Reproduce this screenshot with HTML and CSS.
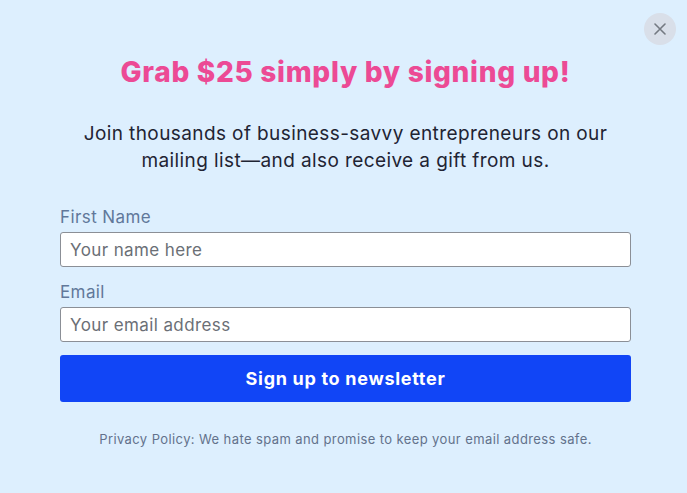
FILE: index.html
```html
<!DOCTYPE html>
<html lang="en">
<head>
    <meta charset="UTF-8">
    <meta name="viewport" content="width=device-width, initial-scale=1.0">
    <title>Newsletter Signup</title>
    <link rel="stylesheet" href="styles.css">
</head>
<body>
    <div class="popup">
        <button class="close-btn" aria-label="Close">
            <svg width="12" height="12" viewBox="0 0 12 12">
                <path d="M1 1 L11 11 M11 1 L1 11" stroke="#747a82" stroke-width="1.6" stroke-linecap="round"/>
            </svg>
        </button>

        <h1>Grab $25 simply by signing up!</h1>
        <p class="intro">Join thousands of business-savvy entrepreneurs on our mailing list—and also receive a gift from us.</p>

        <form class="signup-form">
            <label for="firstName">First Name</label>
            <input type="text" id="firstName" placeholder="Your name here">

            <label for="email">Email</label>
            <input type="email" id="email" placeholder="Your email address">

            <button type="button" class="submit-btn">Sign up to newsletter</button>
        </form>

        <p class="privacy">Privacy Policy: We hate spam and promise to keep your email address safe.</p>
    </div>
</body>
</html>
```

FILE: styles.css
```css
body {
    margin: 0;
    background-color: #ddeffe;
    font-family: 'Inter', 'Roboto', sans-serif;
    letter-spacing: 0.4px;
}

.popup {
    position: relative;
    height: 493px;
    box-sizing: border-box;
    padding: 55px 56px 0 60px;
    text-align: center;
}

.close-btn {
    position: absolute;
    top: 13px;
    right: 11px;
    width: 32px;
    height: 32px;
    border-radius: 50%;
    border: none;
    background-color: #d9dfe9;
    display: flex;
    align-items: center;
    justify-content: center;
    padding: 0;
    cursor: pointer;
}

h1 {
    margin: 0;
    color: #ec4a95;
    font-weight: 800;
    font-size: 28px;
    line-height: 34px;
    letter-spacing: 0.7px;
}

.intro {
    margin: 31px auto 0;
    max-width: 560px;
    color: #1f2433;
    font-size: 19px;
    line-height: 27px;
}

.signup-form {
    display: flex;
    flex-direction: column;
    text-align: left;
    margin-top: 33px;
}

label {
    color: #61789a;
    font-size: 17px;
    line-height: 20px;
    margin-bottom: 5px;
}

input {
    height: 35px;
    box-sizing: border-box;
    border: 1px solid #8b8f96;
    border-radius: 3px;
    padding: 0 9px;
    font-family: inherit;
    font-size: 17px;
    letter-spacing: 0.4px;
    background: #fff;
    margin-bottom: 15px;
}

input::placeholder {
    color: #6b6f76;
}

.submit-btn {
    margin-top: -2px;
    height: 47px;
    border: none;
    border-radius: 3px;
    background-color: #1145f6;
    color: #fff;
    font-family: inherit;
    font-weight: 700;
    font-size: 18px;
    letter-spacing: 0.7px;
    cursor: pointer;
}

.privacy {
    margin: 28px 0 0;
    color: #63728c;
    font-size: 13px;
    line-height: 18px;
}
```
